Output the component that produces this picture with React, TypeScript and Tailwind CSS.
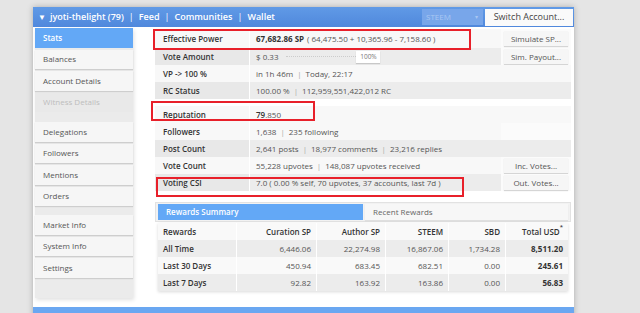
import React from "react";

const font = { fontFamily: '"Open Sans", "Noto Sans", sans-serif' };

function SideBtn({ label, active, disabled }: { label: string; active?: boolean; disabled?: boolean }) {
  let cls = "bg-[#f6f6f6] text-[#555] shadow-[0_1px_1px_rgba(0,0,0,0.12)]";
  if (active) cls = "bg-[#63a8f6] text-white font-semibold";
  if (disabled) cls = "bg-[#e9e9e9] text-[#bdbdbd]";
  return (
    <div className={`h-[19.5px] flex items-center pl-[8px] text-[8px] leading-none ${cls}`}>{label}</div>
  );
}

function Btn({ label, className = "" }: { label: string; className?: string }) {
  return (
    <div
      className={`h-[15px] w-[64px] flex items-center justify-center bg-[#f6f6f6] text-[#555] text-[8px] leading-none shadow-[0_1px_1px_rgba(0,0,0,0.15)] ${className}`}
    >
      {label}
    </div>
  );
}

function Row({
  label,
  children,
  gray,
  h = "h-[17px]",
  btn,
}: {
  label: string;
  children?: React.ReactNode;
  gray?: boolean;
  h?: string;
  btn?: string;
}) {
  return (
    <div className={`flex ${h} ${gray ? "bg-[#ececec]" : "bg-[#f8f8f8]"}`}>
      <div
        className={`w-[95px] shrink-0 flex items-center pl-[8px] text-[8px] font-semibold text-[#333] border-r border-white ${
          gray ? "bg-[#e8e8e8]" : ""
        }`}
      >
        {label}
      </div>
      <div className="flex-1 flex items-center pl-[6px] text-[8px] text-[#555] whitespace-nowrap">{children}</div>
      {btn !== undefined && (
        <div className="w-[70px] shrink-0 flex items-center justify-center bg-[#fbfbfb]">
          {btn && <Btn label={btn} />}
        </div>
      )}
    </div>
  );
}

const Sep = () => <span className="text-[#aaa] mx-[4px]">|</span>;

const cols = ["w-[78px]", "w-[80px]", "w-[69px]", "w-[63px]", "w-[57px]", "flex-1"];

function RRow({ cells, gray, header }: { cells: string[]; gray?: boolean; header?: boolean }) {
  return (
    <div className={`flex h-[17px] ${gray ? "bg-[#ececec]" : "bg-[#f9f9f9]"}`}>
      {cells.map((c, i) => (
        <div
          key={i}
          className={`${cols[i]} flex items-center text-[8px] whitespace-nowrap ${
            i === 0 ? "pl-[5px] justify-start" : "pr-[5px] justify-end border-l border-white"
          } ${
            header || i === 0 ? "font-semibold text-[#333]" : i === 5 ? "font-bold text-[#333]" : "text-[#555]"
          }`}
        >
          {c}
          {header && i === 5 && <sup className="text-[6px] -mt-[4px]">*</sup>}
        </div>
      ))}
    </div>
  );
}

export default function App() {
  return (
    <div className="w-[640px] h-[313px] bg-[#e5e5e5] overflow-hidden relative" style={font}>
      <div className="absolute left-[33px] top-[7px] w-[541px] h-[320px] bg-white shadow-[0_0_6px_rgba(0,0,0,0.25)] flex flex-col">
        {/* Header */}
        <div className="h-[20px] bg-gradient-to-b from-[#609ae6] to-[#5088dc] flex items-center pl-[5px] pr-[1px] shrink-0">
          <span className="text-white text-[8px] mr-[4px]">▼</span>
          <span className="text-white text-[9px] font-semibold whitespace-nowrap">
            jyoti-thelight (79)
            <span className="mx-[5px] font-normal">|</span>Feed
            <span className="mx-[5px] font-normal">|</span>Communities
            <span className="mx-[5px] font-normal">|</span>Wallet
          </span>
          <div className="ml-auto h-[16px] w-[61px] bg-[#78a6ea] flex items-center pl-[4px] pr-[5px] text-[8px] text-[#a9c7f2] mr-[2px]">
            STEEM<span className="ml-auto text-[6px]">▾</span>
          </div>
          <div className="h-[17px] w-[88px] bg-[#fafafa] flex items-center justify-center text-[9px] text-[#444]">
            Switch Account...
          </div>
        </div>
        {/* Body */}
        <div className="flex flex-1 pl-[2px]">
          {/* Sidebar */}
          <div className="w-[98px] h-[270px] mt-[1px] bg-[#ebebeb] shadow-[1px_2px_4px_rgba(0,0,0,0.12)] flex flex-col">
            <div className="flex flex-col gap-[2px]">
              <SideBtn label="Stats" active />
              <SideBtn label="Balances" />
              <SideBtn label="Account Details" />
              <SideBtn label="Witness Details" disabled />
            </div>
            <div className="flex flex-col gap-[2px] mt-[10px]">
              <SideBtn label="Delegations" />
              <SideBtn label="Followers" />
              <SideBtn label="Mentions" />
              <SideBtn label="Orders" />
            </div>
            <div className="flex flex-col gap-[2px] mt-[9px]">
              <SideBtn label="Market Info" />
              <SideBtn label="System Info" />
              <SideBtn label="Settings" />
            </div>
          </div>
          {/* Main */}
          <div className="ml-[22px] w-[416px] flex flex-col pt-[2px]">
            <Row label="Effective Power" h="h-[19px]" btn="Simulate SP...">
              <span className="font-bold text-[#333]">67,682.86 SP</span>
              <span className="ml-[3px]">( 64,475.50 + 10,365.96 - 7,158.60 )</span>
            </Row>
            <Row label="Vote Amount" gray btn="Sim. Payout...">
              <span>$ 0.33</span>
              <div className="ml-[8px] w-[70px] border-t border-dotted border-[#ccc]" />
              <div className="h-[12px] w-[24px] flex items-center justify-center bg-white text-[6.5px] text-[#777] shadow-[0_1px_1px_rgba(0,0,0,0.15)]">
                100%
              </div>
            </Row>
            <Row label="VP -> 100 %">
              in 1h 46m<Sep />Today, 22:17
            </Row>
            <Row label="RC Status" gray>
              100.00 %<Sep />112,959,551,422,012 RC
            </Row>
            <div className="h-[7px]" />
            <Row label="Reputation">
              <span className="font-semibold text-[#333]">79</span>.850
            </Row>
            <Row label="Followers" btn="">
              1,638<Sep />235 following
            </Row>
            <Row label="Post Count" gray>
              2,641 posts<Sep />18,977 comments<Sep />23,216 replies
            </Row>
            <Row label="Vote Count" btn="Inc. Votes...">
              55,228 upvotes<Sep />148,087 upvotes received
            </Row>
            <Row label="Voting CSI" gray btn="Out. Votes...">
              7.0 ( 0.00 % self, 70 upvotes, 37 accounts, last 7d )
            </Row>
            {/* Tabs */}
            <div className="mt-[11px] h-[20px] bg-[#f2f2f2] border border-[#e2e2e2] flex items-center px-[2px] gap-[2px]">
              <div className="w-[205px] h-[16px] bg-[#63a8f6] text-white text-[8px] font-semibold flex items-center pl-[8px]">
                Rewards Summary
              </div>
              <div className="flex-1 h-[16px] bg-[#f7f7f7] text-[#666] text-[8px] flex items-center pl-[8px] shadow-[0_1px_1px_rgba(0,0,0,0.08)]">
                Recent Rewards
              </div>
            </div>
            <div className="mx-[3px] mt-[1px] shadow-[0_1px_3px_rgba(0,0,0,0.15)]">
              <RRow header cells={["Rewards", "Curation SP", "Author SP", "STEEM", "SBD", "Total USD"]} />
              <RRow gray cells={["All Time", "6,446.06", "22,274.98", "16,867.06", "1,734.28", "8,511.20"]} />
              <RRow cells={["Last 30 Days", "450.94", "683.45", "682.51", "0.00", "245.61"]} />
              <RRow gray cells={["Last 7 Days", "92.82", "163.92", "163.86", "0.00", "56.83"]} />
            </div>
          </div>
        </div>
      </div>
      {/* Bottom bar */}
      <div className="absolute left-[33px] top-[307px] w-[541px] h-[8px] bg-[#6aa7f1]" />
      {/* Red annotation boxes */}
      <div className="absolute left-[153px] top-[29px] w-[318px] h-[21px] border-2 border-[#e8202a]" />
      <div className="absolute left-[151px] top-[101px] w-[164px] h-[20px] border-2 border-[#e8202a]" />
      <div className="absolute left-[156px] top-[177px] w-[308px] h-[20px] border-2 border-[#e8202a]" />
    </div>
  );
}
